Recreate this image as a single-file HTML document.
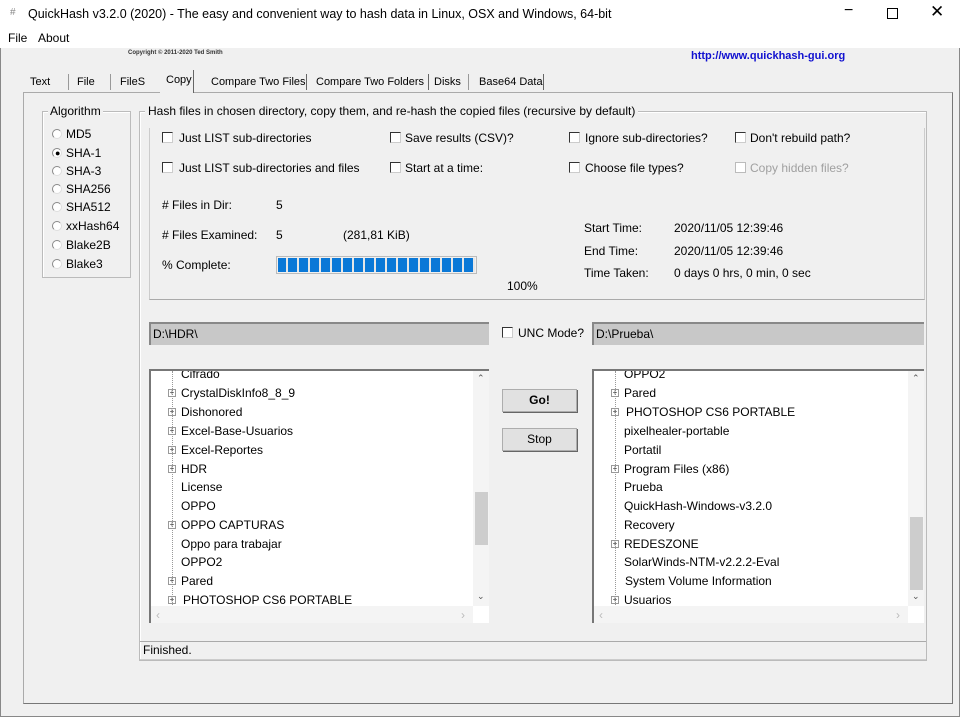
<!DOCTYPE html><html><head><style>
*{box-sizing:border-box;margin:0;padding:0}
body{width:960px;height:717px;overflow:hidden;background:#fff;font-family:"Liberation Sans",sans-serif;font-size:12px;color:#000;position:relative}
.a{position:absolute;white-space:nowrap}
.t{font-size:11px}
.cb{position:absolute;width:11px;height:11px;border:1px solid #333;background:#fff;border-right-color:#ccc;border-bottom-color:#ccc}
.rd{position:absolute;width:10px;height:10px;border-radius:50%;border:1px solid #888;border-right-color:#ddd;border-bottom-color:#ddd;background:#fff}
.gb{position:absolute;border:1px solid #bbb;box-shadow:inset 1px 1px 0 #fff}
.tree{position:absolute;background:#fff;border-top:2px solid #777;border-left:2px solid #777;overflow:hidden}
.row{position:absolute;height:18px;line-height:18px}
.pl{position:absolute;width:8px;height:8px;border:1px solid #999;font-size:8px;line-height:6px;text-align:center;color:#444}
.btn{position:absolute;background:#e1e1e1;border:1px solid #adadad;text-align:center;line-height:21px;box-shadow:1px 1px 0 #666}
.path{position:absolute;background:#c8c8c8;border-top:2px solid #888;border-left:2px solid #888;line-height:20px;padding-left:2px}
</style></head><body>
<div class="a" style="left:10px;top:7px;color:#888;font-size:10px">#</div>
<div class="a" style="left:28px;top:7px;font-size:12.5px">QuickHash v3.2.0 (2020) - The easy and convenient way to hash data in Linux, OSX and Windows, 64-bit</div>
<div class="a" style="left:844px;top:2px;font-size:16px">−</div>
<div class="a" style="left:887px;top:8px;width:11px;height:11px;border:1px solid #000"></div>
<div class="a" style="left:930px;top:2px;font-size:17px">✕</div>
<div class="a" style="left:8px;top:31px">File</div>
<div class="a" style="left:38px;top:31px">About</div>
<div class="a" style="left:0;top:48px;width:960px;height:669px;background:#f0f0f0;border-left:1px solid #888;border-right:1px solid #888;border-bottom:1px solid #888"></div>
<div class="a" style="left:128px;top:50px;font-size:6px;font-weight:bold;color:#333">Copyright © 2011-2020 Ted Smith</div>
<div class="a" style="left:691px;top:50px;font-size:11px;font-weight:bold;color:#1010d0">http://www.quickhash-gui.org</div>
<div class="a" style="left:23px;top:92px;width:930px;height:612px;border:1px solid #aaa;border-right-color:#777;border-bottom-color:#777"></div>
<div class="a t" style="left:30px;top:76px">Text</div>
<div class="a t" style="left:77px;top:76px">File</div>
<div class="a t" style="left:120px;top:76px">FileS</div>
<div class="a" style="left:160px;top:70px;width:34px;height:23px;background:#f0f0f0;border-right:1px solid #666"></div>
<div class="a t" style="left:166px;top:74px">Copy</div>
<div class="a t" style="left:211px;top:76px">Compare Two Files</div>
<div class="a t" style="left:316px;top:76px">Compare Two Folders</div>
<div class="a t" style="left:434px;top:76px">Disks</div>
<div class="a t" style="left:479px;top:76px">Base64 Data</div>
<div class="a" style="left:68px;top:74px;width:1px;height:16px;background:#999"></div>
<div class="a" style="left:110px;top:74px;width:1px;height:16px;background:#999"></div>
<div class="a" style="left:306px;top:74px;width:1px;height:16px;background:#666"></div>
<div class="a" style="left:428px;top:74px;width:1px;height:16px;background:#666"></div>
<div class="a" style="left:468px;top:74px;width:1px;height:16px;background:#999"></div>
<div class="a" style="left:543px;top:74px;width:1px;height:16px;background:#666"></div>
<div class="gb" style="left:42px;top:111px;width:89px;height:167px"></div>
<div class="a" style="left:48px;top:104px;background:#f0f0f0;padding:0 2px">Algorithm</div>
<div class="rd" style="left:52px;top:129px"></div><div class="a" style="left:66px;top:127px">MD5</div>
<div class="rd" style="left:52px;top:148px"></div><div class="a" style="left:55px;top:148px;font-size:9px">●</div><div class="a" style="left:66px;top:146px">SHA-1</div>
<div class="rd" style="left:52px;top:166px"></div><div class="a" style="left:66px;top:164px">SHA-3</div>
<div class="rd" style="left:52px;top:184px"></div><div class="a" style="left:66px;top:182px">SHA256</div>
<div class="rd" style="left:52px;top:202px"></div><div class="a" style="left:66px;top:200px">SHA512</div>
<div class="rd" style="left:52px;top:221px"></div><div class="a" style="left:66px;top:219px">xxHash64</div>
<div class="rd" style="left:52px;top:240px"></div><div class="a" style="left:66px;top:238px">Blake2B</div>
<div class="rd" style="left:52px;top:259px"></div><div class="a" style="left:66px;top:257px">Blake3</div>
<div class="gb" style="left:139px;top:111px;width:788px;height:550px"></div>
<div class="a" style="left:145px;top:104px;background:#f0f0f0;padding:0 3px">Hash files in chosen directory, copy them, and re-hash the copied files (recursive by default)</div>
<div class="a" style="left:149px;top:128px;width:776px;height:172px;border-left:1px solid #ccc;border-bottom:1px solid #aaa;border-right:1px solid #ccc"></div>
<div class="cb" style="left:162px;top:132px"></div><div class="a" style="left:179px;top:131px">Just LIST sub-directories</div>
<div class="cb" style="left:390px;top:132px"></div><div class="a" style="left:405px;top:131px">Save results (CSV)?</div>
<div class="cb" style="left:569px;top:132px"></div><div class="a" style="left:585px;top:131px">Ignore sub-directories?</div>
<div class="cb" style="left:735px;top:132px"></div><div class="a" style="left:750px;top:131px">Don't rebuild path?</div>
<div class="cb" style="left:162px;top:162px"></div><div class="a" style="left:179px;top:161px">Just LIST sub-directories and files</div>
<div class="cb" style="left:390px;top:162px"></div><div class="a" style="left:405px;top:161px">Start at a time:</div>
<div class="cb" style="left:569px;top:162px"></div><div class="a" style="left:585px;top:161px">Choose file types?</div>
<div class="cb" style="left:735px;top:162px;border-color:#bbb"></div><div class="a" style="left:750px;top:161px;color:#a0a0a0">Copy hidden files?</div>
<div class="a" style="left:162px;top:198px"># Files in Dir:</div><div class="a" style="left:276px;top:198px">5</div>
<div class="a" style="left:162px;top:228px"># Files Examined:</div><div class="a" style="left:276px;top:228px">5</div><div class="a" style="left:343px;top:228px">(281,81 KiB)</div>
<div class="a" style="left:162px;top:258px">% Complete:</div>
<div class="a" style="left:276px;top:256px;width:201px;height:18px;border:1px solid #bbb;background:repeating-linear-gradient(90deg,#0a78d7 0 9px,#e6e6e6 9px 11px);background-clip:content-box;padding:1px"></div>
<div class="a" style="left:507px;top:279px">100%</div>
<div class="a" style="left:584px;top:221px">Start Time:</div><div class="a" style="left:674px;top:221px">2020/11/05 12:39:46</div>
<div class="a" style="left:584px;top:244px">End Time:</div><div class="a" style="left:674px;top:244px">2020/11/05 12:39:46</div>
<div class="a" style="left:584px;top:266px">Time Taken:</div><div class="a" style="left:674px;top:266px">0 days 0 hrs, 0 min, 0 sec</div>
<div class="path" style="left:149px;top:322px;width:340px;height:23px">D:\HDR\</div>
<div class="cb" style="left:502px;top:327px"></div><div class="a" style="left:518px;top:326px">UNC Mode?</div>
<div class="path" style="left:592px;top:322px;width:332px;height:23px">D:\Prueba\</div>
<div class="tree" style="left:149px;top:369px;width:340px;height:254px">
<div class="a" style="left:21px;top:0;width:1px;height:240px;border-left:1px dotted #999"></div>
<div class="row" style="left:30px;top:-6px">Cifrado</div>
<div class="row" style="left:30px;top:13px">CrystalDiskInfo8_8_9</div>
<div class="row" style="left:30px;top:32px">Dishonored</div>
<div class="row" style="left:30px;top:51px">Excel-Base-Usuarios</div>
<div class="row" style="left:30px;top:70px">Excel-Reportes</div>
<div class="row" style="left:30px;top:89px">HDR</div>
<div class="row" style="left:30px;top:107px">License</div>
<div class="row" style="left:30px;top:126px">OPPO</div>
<div class="row" style="left:30px;top:145px">OPPO CAPTURAS</div>
<div class="row" style="left:30px;top:164px">Oppo para trabajar</div>
<div class="row" style="left:30px;top:182px">OPPO2</div>
<div class="row" style="left:30px;top:201px">Pared</div>
<div class="row" style="left:32px;top:220px">PHOTOSHOP CS6 PORTABLE</div>
<div class="pl" style="left:17px;top:18px">+</div><div class="pl" style="left:17px;top:37px">+</div><div class="pl" style="left:17px;top:56px">+</div><div class="pl" style="left:17px;top:75px">+</div><div class="pl" style="left:17px;top:94px">+</div><div class="pl" style="left:17px;top:150px">+</div><div class="pl" style="left:17px;top:206px">+</div><div class="pl" style="left:17px;top:225px">+</div>
<div class="a" style="left:322px;top:0;width:17px;height:235px;background:#f4f4f4"></div>
<div class="a" style="left:324px;top:121px;width:13px;height:53px;background:#cdcdcd"></div>
<div class="a" style="left:326px;top:2px;font-size:9px;color:#555">⌃</div>
<div class="a" style="left:326px;top:220px;font-size:9px;color:#555">⌄</div>
<div class="a" style="left:0;top:235px;width:322px;height:17px;background:#f4f4f4"></div>
<div class="a" style="left:5px;top:237px;color:#bbb">‹</div><div class="a" style="left:310px;top:237px;color:#bbb">›</div>
</div>
<div class="btn" style="left:502px;top:389px;width:75px;height:23px;font-weight:bold">Go!</div>
<div class="btn" style="left:502px;top:428px;width:75px;height:23px">Stop</div>
<div class="tree" style="left:592px;top:369px;width:332px;height:254px">
<div class="a" style="left:21px;top:0;width:1px;height:240px;border-left:1px dotted #999"></div>
<div class="row" style="left:30px;top:-6px">OPPO2</div>
<div class="row" style="left:30px;top:13px">Pared</div>
<div class="row" style="left:32px;top:32px">PHOTOSHOP CS6 PORTABLE</div>
<div class="row" style="left:30px;top:51px">pixelhealer-portable</div>
<div class="row" style="left:30px;top:70px">Portatil</div>
<div class="row" style="left:30px;top:89px">Program Files (x86)</div>
<div class="row" style="left:30px;top:107px">Prueba</div>
<div class="row" style="left:30px;top:126px">QuickHash-Windows-v3.2.0</div>
<div class="row" style="left:30px;top:145px">Recovery</div>
<div class="row" style="left:30px;top:164px">REDESZONE</div>
<div class="row" style="left:30px;top:182px">SolarWinds-NTM-v2.2.2-Eval</div>
<div class="row" style="left:31px;top:201px">System Volume Information</div>
<div class="row" style="left:30px;top:220px">Usuarios</div>
<div class="pl" style="left:17px;top:18px">+</div><div class="pl" style="left:17px;top:37px">+</div><div class="pl" style="left:17px;top:94px">+</div><div class="pl" style="left:17px;top:169px">+</div><div class="pl" style="left:17px;top:225px">+</div>
<div class="a" style="left:314px;top:0;width:17px;height:235px;background:#f4f4f4"></div>
<div class="a" style="left:316px;top:146px;width:13px;height:73px;background:#cdcdcd"></div>
<div class="a" style="left:318px;top:2px;font-size:9px;color:#555">⌃</div>
<div class="a" style="left:318px;top:220px;font-size:9px;color:#555">⌄</div>
<div class="a" style="left:0;top:235px;width:314px;height:17px;background:#f4f4f4"></div>
<div class="a" style="left:5px;top:237px;color:#bbb">‹</div><div class="a" style="left:302px;top:237px;color:#bbb">›</div>
</div>
<div class="a" style="left:140px;top:641px;width:786px;height:19px;border-top:1px solid #aaa;border-bottom:1px solid #ccc"></div>
<div class="a" style="left:143px;top:643px">Finished.</div>
</body></html>
